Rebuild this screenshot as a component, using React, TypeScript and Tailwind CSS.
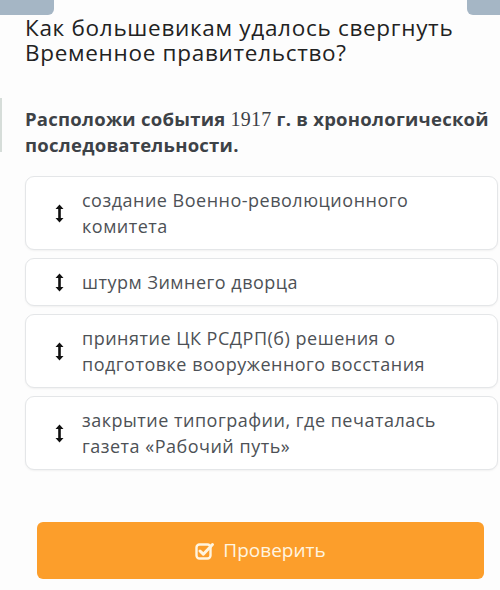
import React from 'react';

const items = [
  'создание Военно-революционного комитета',
  'штурм Зимнего дворца',
  'принятие ЦК РСДРП(б) решения о подготовке вооруженного восстания',
  'закрытие типографии, где печаталась газета «Рабочий путь»',
];

const ArrowsV = () => (
  <svg width="9" height="19" viewBox="0 0 9 19" className="shrink-0">
    <path d="M4.5 0.5 L8.5 5 L5.8 5 L5.8 14 L8.5 14 L4.5 18.5 L0.5 14 L3.2 14 L3.2 5 L0.5 5 Z" fill="#111" />
  </svg>
);

const CheckSquare = () => (
  <svg width="20" height="19" viewBox="0 0 20 19" className="shrink-0">
    <rect x="1.5" y="3.5" width="14" height="14" rx="3" fill="none" stroke="#fff5e0" strokeWidth="2.4" />
    <path d="M5 10 L8.3 13.2 L17.5 3.5" fill="none" stroke="#fff5e0" strokeWidth="3" strokeLinecap="round" strokeLinejoin="round" />
  </svg>
);

export default function App() {
  return (
    <div
      className="w-[500px] h-[590px] bg-[#fdfdfd] overflow-hidden flex flex-col"
      style={{ fontFamily: '"Open Sans", "Noto Sans", sans-serif' }}
    >
      <div className="flex justify-between h-[15px] shrink-0">
        <div className="w-[54px] h-full bg-[#a5b6c5] rounded-br-[6px]" />
        <div className="w-[33px] h-full bg-[#a5b6c5] rounded-bl-[6px]" />
      </div>

      <h1 className="pl-[25px] text-[22.5px] leading-[25px] text-[#222] tracking-[0.7px]">
        Как большевикам удалось свергнуть
        <br />
        Временное правительство?
      </h1>

      <div className="mt-[41px] flex">
        <div className="w-[2px] h-[54px] bg-[#d6ddd9] -mt-[8px]" />
        <p className="pl-[23px] text-[18.5px] leading-[26px] font-bold text-[#3d4247] tracking-[0.25px]">
          Расположи события{' '}
          <span className="font-normal text-[20px]" style={{ fontFamily: '"Liberation Serif", serif' }}>
            1917
          </span>{' '}
          г. в хронологической
          <br />
          последовательности.
        </p>
      </div>

      <div className="mt-[18px] ml-[25px] mr-[2px] flex flex-col gap-[8px]">
        {items.map((text, i) => (
          <div
            key={i}
            className="flex items-center gap-[18px] pl-[29px] pr-[12px] py-[10px] bg-white border border-[#e4e6e8] rounded-[9px] shadow-[0_1px_2px_rgba(0,0,0,0.05)]"
          >
            <ArrowsV />
            <span className="text-[18px] leading-[26px] text-[#4d5156] tracking-[0.5px] pr-[40px]">{text}</span>
          </div>
        ))}
      </div>

      <div className="mt-[52px] ml-[37px] w-[447px]">
        <button className="w-full h-[57px] rounded-[6px] bg-[#fc9e2b] flex items-center justify-center gap-[8px] text-[19px] text-[#fff5e0]">
          <CheckSquare />
          <span>Проверить</span>
        </button>
      </div>
    </div>
  );
}
